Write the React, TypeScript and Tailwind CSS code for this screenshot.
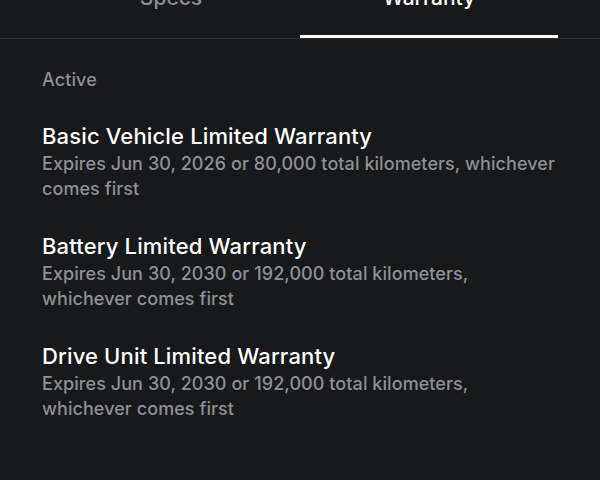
import React from 'react';

const warranties = [
  {
    title: 'Basic Vehicle Limited Warranty',
    detail: 'Expires Jun 30, 2026 or 80,000 total kilometers, whichever comes first',
  },
  {
    title: 'Battery Limited Warranty',
    detail: 'Expires Jun 30, 2030 or 192,000 total kilometers, whichever comes first',
  },
  {
    title: 'Drive Unit Limited Warranty',
    detail: 'Expires Jun 30, 2030 or 192,000 total kilometers, whichever comes first',
  },
];

const App = () => {
  return (
    <div
      className="w-[600px] h-[480px] overflow-hidden bg-[#17191b] text-white"
      style={{ fontFamily: 'Inter, "Noto Sans", sans-serif' }}
    >
      {/* タブ */}
      <div className="border-b border-[#2b2d30]">
        <div className="flex px-[42px] -mt-[16px]">
          <div className="flex-1 text-center">
            <div className="text-[21px] leading-[28px] font-medium text-[#8e9093] pb-[26px]">Specs</div>
          </div>
          <div className="flex-1 text-center">
            <div className="text-[21px] leading-[28px] font-medium text-white pb-[23px]">Warranty</div>
            <div className="h-[3px] bg-white"></div>
          </div>
        </div>
      </div>

      {/* 保証一覧 */}
      <div className="px-[42px] pt-[29px]">
        <p className="text-[18px] leading-[24px] font-medium tracking-[0.1px] text-[#8e9093]">Active</p>
        <ul className="mt-[29px] space-y-[30px] w-[518px]">
          {warranties.map((w) => (
            <li key={w.title}>
              <h3 className="text-[22px] leading-[30px] font-medium tracking-[0.15px] text-white">{w.title}</h3>
              <p className="text-[18px] leading-[25px] font-medium tracking-[0.07px] text-[#8e9093]">{w.detail}</p>
            </li>
          ))}
        </ul>
      </div>
    </div>
  );
};

export default App;
